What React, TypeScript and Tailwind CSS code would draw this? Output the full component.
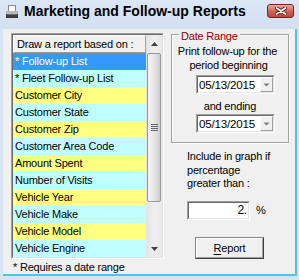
import React from "react";

const items: [string, "sel" | "c" | "y"][] = [
  ["* Follow-up List", "sel"],
  ["* Fleet Follow-up List", "c"],
  ["Customer City", "y"],
  ["Customer State", "c"],
  ["Customer Zip", "y"],
  ["Customer Area Code", "c"],
  ["Amount Spent", "y"],
  ["Number of Visits", "c"],
  ["Vehicle Year", "y"],
  ["Vehicle Make", "c"],
  ["Vehicle Model", "y"],
  ["Vehicle Engine", "c"],
];

function Sunken({ className, children }: { className: string; children: React.ReactNode }) {
  return (
    <div className={"border border-t-[#a0a0a0] border-l-[#a0a0a0] border-r-white border-b-white " + className}>
      <div className="h-full w-full border border-t-[#696969] border-l-[#696969] border-r-[#e3e3e3] border-b-[#e3e3e3] bg-white flex items-center">
        {children}
      </div>
    </div>
  );
}

function DateCombo() {
  return (
    <Sunken className="ml-[24px] w-[79px] h-[19px]">
      <span className="text-[11.6px] leading-[15px] pl-[1px]">05/13/2015</span>
      <div className="ml-auto w-[13px] h-full bg-[#f0f0f0] border border-t-white border-l-white border-r-[#a0a0a0] border-b-[#a0a0a0] flex items-center justify-center">
        <svg width="7" height="4" viewBox="0 0 7 4">
          <path d="M0.5 0.5 H6.5 L3.5 3.5 Z" fill="#7a7a7a" />
        </svg>
      </div>
    </Sunken>
  );
}

export default function App() {
  return (
    <div className="w-[299px] h-[280px] bg-[#d7e3f2] flex flex-col overflow-hidden text-black font-['Liberation_Sans',Arial,sans-serif] text-[11px] tracking-[-0.2px]">
      {/* Title bar */}
      <div className="h-[29px] flex items-start shrink-0 bg-gradient-to-b from-[#dce7f5] to-[#d2e0f1]">
        <svg className="ml-[6px] mt-[5px]" width="12" height="13" viewBox="0 0 12 13">
          <rect x="2.5" y="0.5" width="7" height="6" fill="#ffffff" stroke="#8a8a8a" />
          <rect x="0" y="6" width="12" height="3" fill="#b8b8b8" />
          <rect x="0" y="9" width="12" height="4" fill="#3c3c3c" />
          <rect x="1" y="9" width="10" height="1" fill="#707070" />
        </svg>
        <div className="ml-[6px] mt-[3px] text-[14px] leading-[17px] font-bold tracking-normal">
          Marketing and Follow-up Reports
        </div>
        <div className="ml-auto mr-[5px] mt-[4px] w-[27px] h-[14px] rounded-[3px] border border-[#6b2b25] bg-gradient-to-b from-[#e8a99c] via-[#d0675a] to-[#c0453a] flex items-center justify-center">
          <svg width="12" height="8" viewBox="0 0 12 8">
            <path d="M1.5 1 L10.5 7 M10.5 1 L1.5 7" stroke="#4a1712" strokeWidth="3.4" strokeLinecap="round" />
            <path d="M1.5 1 L10.5 7 M10.5 1 L1.5 7" stroke="#ffffff" strokeWidth="1.8" strokeLinecap="round" />
          </svg>
        </div>
      </div>

      {/* Body */}
      <div className="flex h-[247px] shrink-0">
        <div className="w-[3px]" />
        <div className="flex-1 border-r-2 border-b-2 border-[#4ec3e6] bg-[#f0f0f0] flex">
          {/* Left column */}
          <div className="ml-[8px] mt-[4px] w-[153px] flex flex-col">
            <div className="w-[153px] h-[226px] border border-t-[#a0a0a0] border-l-[#a0a0a0] border-r-white border-b-white">
              <div className="h-full border border-t-[#696969] border-l-[#696969] border-r-[#e3e3e3] border-b-[#e3e3e3] flex">
                <div className="w-[133px] flex flex-col">
                  <div className="h-[18px] bg-[#f0f0f0] border border-t-white border-l-white border-r-[#a0a0a0] border-b-[#a0a0a0] pl-[3px] leading-[16px] whitespace-nowrap">
                    Draw a report based on :
                  </div>
                  {items.map(([t, k]) =>
                    k === "sel" ? (
                      <div
                        key={t}
                        className="h-[17px] bg-[#3399ff] text-white border border-dotted border-[#d8761f] pl-[1px] leading-[15px] whitespace-nowrap"
                      >
                        {t}
                      </div>
                    ) : (
                      <div
                        key={t}
                        className={
                          "h-[17px] pl-[2px] leading-[17px] whitespace-nowrap " +
                          (k === "c" ? "bg-[#c0ffff]" : "bg-[#ffff80]")
                        }
                      >
                        {t}
                      </div>
                    )
                  )}
                </div>
                {/* Scrollbar */}
                <div className="w-[16px] flex flex-col bg-gradient-to-r from-[#e3e3e3] via-[#efefef] to-[#e8e8e8]">
                  <div className="h-[17px] flex items-center justify-center">
                    <svg width="7" height="4" viewBox="0 0 7 4">
                      <path d="M3.5 0 L7 4 H0 Z" fill="#404040" />
                    </svg>
                  </div>
                  <div className="mt-[1px] mx-[1px] h-[149px] rounded-[2px] border border-[#979797] bg-gradient-to-r from-[#f4f4f4] via-[#e6e6e6] to-[#cdcdcd] flex items-center justify-center">
                    <svg width="7" height="7" viewBox="0 0 7 7">
                      <path d="M0 0.5 H7 M0 2.5 H7 M0 4.5 H7 M0 6.5 H7" stroke="#6a6a6a" strokeWidth="1" />
                    </svg>
                  </div>
                  <div className="flex-1" />
                  <div className="h-[17px] flex items-center justify-center">
                    <svg width="7" height="4" viewBox="0 0 7 4">
                      <path d="M0 0 H7 L3.5 4 Z" fill="#404040" />
                    </svg>
                  </div>
                </div>
              </div>
            </div>
            <div className="mt-[1px] pl-[2px] h-[14px] leading-[14px] whitespace-nowrap">* Requires a date range</div>
          </div>

          {/* Right column */}
          <div className="ml-[7px] w-[118px] flex flex-col">
            <div className="mt-[5px] h-[109px] relative border border-[#a0a0a0] shadow-[inset_1px_1px_0_#ffffff,1px_1px_0_#ffffff] flex flex-col">
              <div className="absolute -top-[6px] left-[7px] px-[2px] bg-[#f0f0f0] text-[#8b0000] leading-[14px]">
                Date Range
              </div>
              <div className="mt-[9px] pr-[5px] text-center leading-[14px] whitespace-nowrap">Print follow-up for the</div>
              <div className="pr-[3px] text-center leading-[14px] whitespace-nowrap">period beginning</div>
              <div className="mt-[3px]">
                <DateCombo />
              </div>
              <div className="mt-[5px] text-center leading-[14px] whitespace-nowrap">and ending</div>
              <div className="mt-[1px]">
                <DateCombo />
              </div>
            </div>
            <div className="mt-[7px] ml-[16px] leading-[13.5px]">
              <div>Include in graph if</div>
              <div>percentage</div>
              <div>greater than :</div>
            </div>
            <div className="mt-[10px] ml-[16px] flex items-center">
              <Sunken className="w-[63px] h-[19px]">
                <span className="ml-auto pr-[1px] text-[12px] leading-[15px]">2.</span>
              </Sunken>
              <span className="ml-[6px]">%</span>
            </div>
            <div className="mt-[17px] ml-[24px] w-[69px] h-[22px] border border-[#858585] border-r-[#404040] border-b-[#404040]">
              <div className="h-full border border-t-white border-l-white border-r-[#a0a0a0] border-b-[#a0a0a0] bg-[#f0f0f0] flex items-center justify-center leading-[14px]">
                <span>
                  <span className="underline underline-offset-[2px]">R</span>eport
                </span>
              </div>
            </div>
          </div>
        </div>
        <div className="w-[2px]" />
      </div>
      <div className="flex-1" />
    </div>
  );
}
